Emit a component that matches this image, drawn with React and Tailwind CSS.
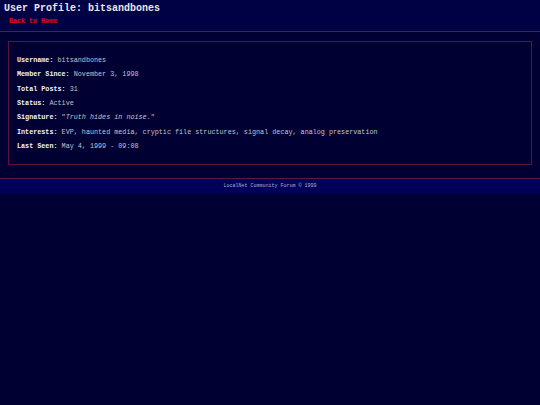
import React from "react";

const rows = [
  { label: "Username", value: "bitsandbones" },
  { label: "Member Since", value: "November 3, 1998" },
  { label: "Total Posts", value: "31" },
  { label: "Status", value: "Active" },
  { label: "Signature", value: "Truth hides in noise.", sig: true },
  {
    label: "Interests",
    value:
      "EVP, haunted media, cryptic file structures, signal decay, analog preservation",
  },
  { label: "Last Seen", value: "May 4, 1999 - 09:08" },
];

export default function App() {
  return (
    <div className="min-h-screen bg-[#000033] font-['Courier_New','Nimbus_Mono_PS','FreeMono',Courier,monospace] text-[#c4c4cc]">
      {/* header */}
      <div className="h-[32px] bg-[#000044] border-b border-[#5c1848] px-[4px] pt-[3px]">
        <h1 className="text-[10px] leading-[12px] font-bold text-[#e8e8f0]">
          User Profile: bitsandbones
        </h1>
        <a className="block ml-[5px] mt-[2px] text-[6.7px] leading-[8px] font-bold text-[#e01010]">
          Back to Home
        </a>
      </div>

      {/* profile box */}
      <div className="mx-[8px] mt-[9px] border border-[#5a1440] px-[8px] py-[11px]">
        {rows.map((r) => (
          <div key={r.label} className="h-[14.33px] flex items-center text-[6.75px] whitespace-pre">
            <span className="font-bold text-[#f4f4f8]">{r.label}:</span>
            <span> </span>
            {r.sig ? (
              <span>
                "<em className="italic">{r.value}</em>"
              </span>
            ) : (
              <span>{r.value}</span>
            )}
          </div>
        ))}
      </div>

      {/* footer */}
      <div className="mt-[13px] border-t border-[#5c1848] bg-[#00005a] h-[16px] flex items-center justify-center text-[5px] text-[#b0b0c8]">
        LocalNet Community Forum © 1999
      </div>
    </div>
  );
}
